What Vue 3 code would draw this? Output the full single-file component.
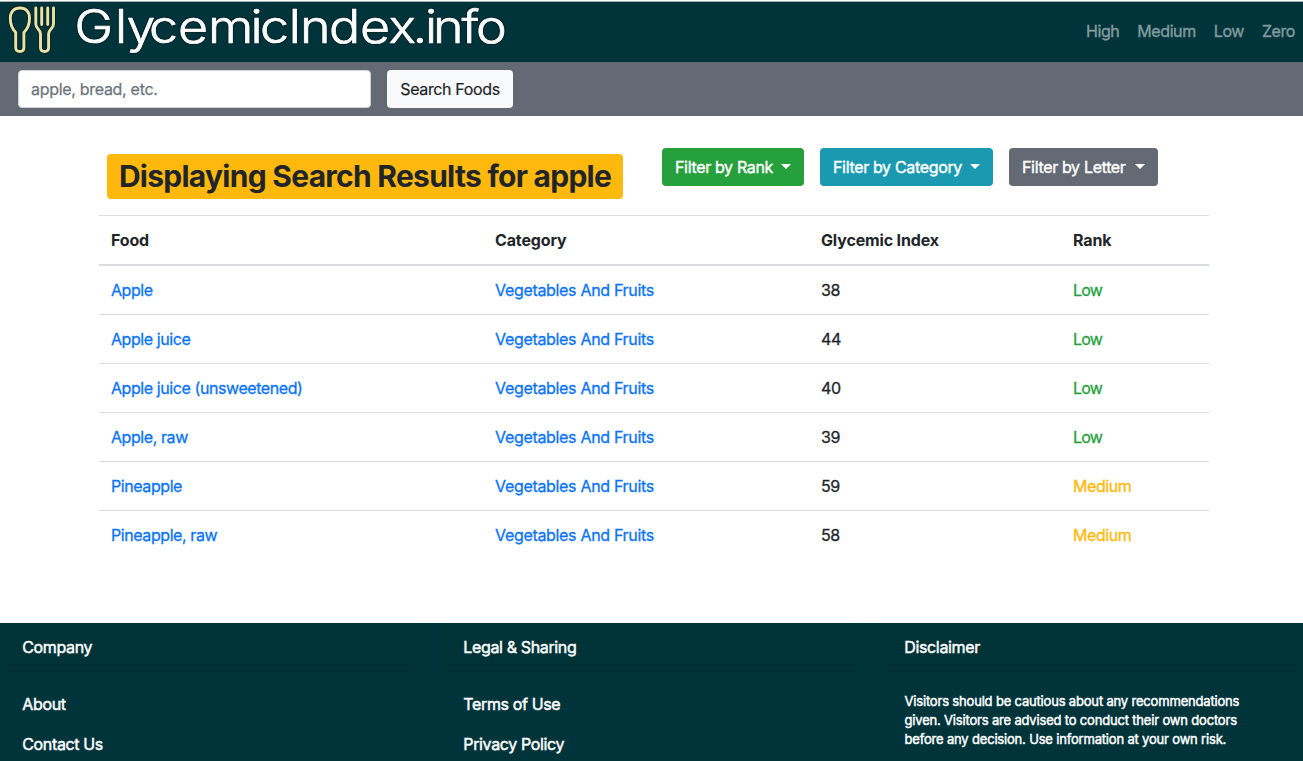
<script setup>
const ranks = ['High', 'Medium', 'Low', 'Zero']
const filters = [
  { label: 'Filter by Rank', tone: 'green' },
  { label: 'Filter by Category', tone: 'teal' },
  { label: 'Filter by Letter', tone: 'slate' },
]
const foods = [
  { name: 'Apple', gi: 38, rank: 'Low' },
  { name: 'Apple juice', gi: 44, rank: 'Low' },
  { name: 'Apple juice (unsweetened)', gi: 40, rank: 'Low' },
  { name: 'Apple, raw', gi: 39, rank: 'Low' },
  { name: 'Pineapple', gi: 59, rank: 'Medium' },
  { name: 'Pineapple, raw', gi: 58, rank: 'Medium' },
]
</script>

<template>
  <div class="page">
    <header class="navbar">
      <svg class="brand" width="520" height="60" viewBox="0 2 520 60" role="img" aria-label="GlycemicIndex.info">
        <g class="cutlery">
          <path d="M15.700 32.500C12 28.500 10.300 23.500 10.300 18.500C10.300 12 14 8 20 8S29.500 12 29.500 18.500C29.500 23.500 27.800 28.500 23.900 32.500V47.500C23.900 50 22.500 51.500 19.800 51.500S15.700 50 15.700 47.500Z" />
          <path d="M35.800 8V24C35.800 29 40.500 29 40.500 34V47.500C40.500 50 42 51.500 44.600 51.500S48.600 50 48.600 47.500V34C48.600 29 53.500 29 53.500 24V8M41.700 8V24.500M47.700 8V24.500" />
        </g>
        <text class="wordmark" transform="scale(1.13 1)" y="43.300" x="65.900 101.800 112 131.900 157.500 184.100 221.700 230.100 254.900 265.500 291.200 318.600 343.800 365 376.100 383.200 408.400 421.200">GlycemicIndex.info</text>
      </svg>
      <nav class="ranks"><a v-for="r in ranks" :key="r">{{ r }}</a></nav>
    </header>
    <form class="search" @submit.prevent>
      <input type="text" placeholder="apple, bread, etc." />
      <button>Search Foods</button>
    </form>
    <main>
      <div class="heading">
        <h1>Displaying Search Results for apple</h1>
        <div class="filters">
          <button v-for="f in filters" :key="f.label" :class="f.tone"><span>{{ f.label }}</span><i></i></button>
        </div>
      </div>
      <table>
        <thead>
          <tr><th class="c1">Food</th><th class="c2">Category</th><th class="c3">Glycemic Index</th><th>Rank</th></tr>
        </thead>
        <tbody>
          <tr v-for="f in foods" :key="f.name">
            <td><a>{{ f.name }}</a></td>
            <td class="category"><a>Vegetables And Fruits</a></td>
            <td>{{ f.gi }}</td>
            <td :class="f.rank.toLowerCase()">{{ f.rank }}</td>
          </tr>
        </tbody>
      </table>
    </main>
    <footer>
      <section>
        <h2>Company</h2>
        <div class="links"><a>About</a><a>Contact Us</a></div>
      </section>
      <section>
        <h2>Legal &amp; Sharing</h2>
        <div class="links"><a>Terms of Use</a><a>Privacy Policy</a></div>
      </section>
      <section>
        <h2>Disclaimer</h2>
        <p>Visitors should be cautious about any recommendations<br />given. Visitors are advised to conduct their own doctors<br />before any decision. Use information at your own risk.</p>
      </section>
    </footer>
  </div>
</template>

<style>
body { margin: 0; background: #fff; overflow: hidden; }
</style>

<style scoped>
* { box-sizing: border-box; }
.page {
  height: 761px;
  display: flex;
  flex-direction: column;
  font: 16px/24px Inter, "Liberation Sans", sans-serif;
  letter-spacing: -0.36px;
  color: #212529;
}
.navbar {
  flex: none;
  height: 62px;
  border-top: 1px solid #fff;
  box-shadow: inset 0 1px #a5adb0;
  background: #00343b;
  display: flex;
  justify-content: space-between;
  padding: 1px 8px 0 0;
}
.brand { display: block; overflow: visible; }
.cutlery { fill: none; stroke: #ece2a0; stroke-width: 2.9; stroke-linecap: round; stroke-linejoin: round; filter: drop-shadow(0 0 1px #001015); }
.wordmark { font: 300 46px Inter, sans-serif; letter-spacing: 0; fill: #fff; stroke: #fff; stroke-width: 0.7; stroke-linejoin: round; filter: drop-shadow(0 0 1px #001015); }
.ranks { display: flex; gap: 18px; padding-top: 17px; color: #809a9d; letter-spacing: -0.42px; -webkit-text-stroke: 0.4px; }
.search { flex: none; height: 54px; background: #636a73; display: flex; gap: 16px; padding: 8px 18px; }
input, button { font: inherit; letter-spacing: inherit; border-radius: 4px; height: 38px; }
input { width: 353px; border: 1px solid #ced4da; padding: 0 12px; background: #fff; -webkit-text-stroke: 0.25px; letter-spacing: -0.3px; }
input::placeholder { color: #6c757d; opacity: 1; }
.search button { width: 126px; border: 0; padding: 0; background: #f8f9fa; color: #212529; -webkit-text-stroke: 0.2px; }
main { flex: none; height: 507px; padding: 32px 94px 0 99px; }
.heading { height: 67px; display: flex; }
h1 {
  margin: 6px 39px 0 8px;
  width: 516px;
  height: 45px;
  border-radius: 4px;
  background: #ffb90c;
  font-size: 30px;
  line-height: 45px;
  font-weight: 700;
  letter-spacing: -0.73px;
  text-align: center;
  white-space: nowrap;
}
.filters { display: flex; gap: 16px; color: #fff; }
.filters button { border: 0; color: #fff; padding: 0 13px; display: flex; align-items: center; justify-content: space-between; white-space: nowrap; letter-spacing: -0.34px; -webkit-text-stroke: 0.4px; }
.filters i { border: 5px solid transparent; border-top-color: #fff; border-bottom: 0; margin-bottom: 1px; }
.green { width: 142px; background: #269f3d; }
.teal { width: 173px; background: #1a99b0; }
.slate { width: 149px; background: #636a73; }
table { width: 1110px; border-collapse: separate; border-spacing: 0; table-layout: fixed; }
.c1 { width: 384px; }
.c2 { width: 326px; }
.c3 { width: 252px; }
th, td { padding: 12px; border-top: 1px solid #dadee2; text-align: left; }
th { border-bottom: 1px solid #dadee2; font-weight: 700; letter-spacing: -0.15px; }
td { letter-spacing: -0.42px; -webkit-text-stroke: 0.3px; }
td.category { letter-spacing: -0.32px; }
td a { color: #0a74f8; }
.low { color: #269f3d; letter-spacing: -0.8px; }
.medium { color: #ffb90c; }
footer { flex: 1; background: #00343b; color: #fff; display: flex; gap: 28.5px; padding-left: 2px; -webkit-text-stroke: 0.45px; }
section { width: 412.500px; }
h2 { margin: 0; height: 49px; padding: 12px 20.300px; font: inherit; background: #003338; border-bottom: 1px solid #003035; }
.links { display: flex; flex-direction: column; gap: 16px; padding: 20px 20.300px; }
p { margin: 0; padding: 20px 20.500px; font-size: 13px; line-height: 19px; letter-spacing: -0.18px; white-space: nowrap; }
</style>
